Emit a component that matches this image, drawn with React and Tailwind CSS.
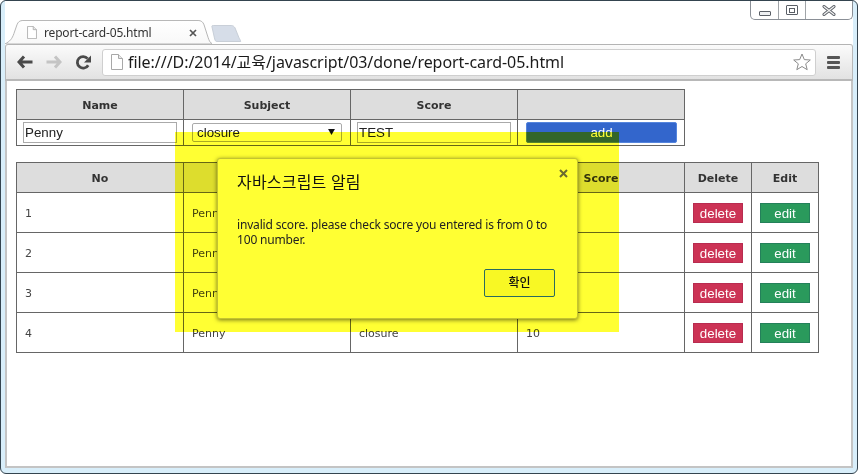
import React from 'react';

const rows = [
    { no: 1, name: 'Penny', subject: 'closure', score: 10 },
    { no: 2, name: 'Penny', subject: 'closure', score: 10 },
    { no: 3, name: 'Penny', subject: 'closure', score: 10 },
    { no: 4, name: 'Penny', subject: 'closure', score: 10 },
];

const PageIcon = ({ className }) => (
    <svg className={className} viewBox="0 0 12 16" fill="none">
        <path d="M0.5 0.5H7.5L11.5 4.5V15.5H0.5Z" fill="#fff" stroke="#a8a8a8" />
        <path d="M7.5 0.5V4.5H11.5" fill="#e8e8e8" stroke="#a8a8a8" />
    </svg>
);

function WindowControls() {
    return (
        <div className="flex justify-end">
            <div className="flex h-[19px] w-[103px] rounded-b-[5px] border border-t-0 border-[#8a8f96] bg-white">
                <div className="flex w-[28px] items-center justify-center border-r border-[#a0a4a8] pt-[6px]">
                    <div className="h-[5px] w-[12px] rounded-[1px] border border-[#5a5f66] bg-[#eef0f2]" />
                </div>
                <div className="flex w-[27px] items-center justify-center border-r border-[#a0a4a8]">
                    <div className="flex h-[10px] w-[12px] items-center justify-center rounded-[1px] border border-[#5a5f66]">
                        <div className="h-[5px] w-[6px] border border-[#5a5f66]" />
                    </div>
                </div>
                <div className="flex flex-1 items-center justify-center">
                    <svg width="14" height="11" viewBox="0 0 14 11">
                        <path d="M2 1.5L12 9.5M12 1.5L2 9.5" stroke="#5a5f66" strokeWidth="3" strokeLinecap="round" />
                        <path d="M2 1.5L12 9.5M12 1.5L2 9.5" stroke="#f4f4f4" strokeWidth="1.2" strokeLinecap="round" />
                    </svg>
                </div>
            </div>
        </div>
    );
}

function TabStrip() {
    return (
        <div className="relative flex h-[24px] items-end">
            {/* tab outline */}
            <div className="relative h-[24px] w-[207px] shrink-0">
                <svg className="absolute inset-0" width="207" height="24" viewBox="0 0 208 25" preserveAspectRatio="none">
                    <defs>
                        <linearGradient id="tabfill" x1="0" y1="0" x2="0" y2="1">
                            <stop offset="0" stopColor="#ffffff" />
                            <stop offset="1" stopColor="#f8f8f8" />
                        </linearGradient>
                    </defs>
                    <path d="M0 25C5 22 7 20 9 14L12 5C13 2 15 0.5 18 0.5H194C197 0.5 199 2 200 5L204 18C205 21 206 24 208 24.5V25Z" fill="url(#tabfill)" stroke="#b4b4b4" />
                </svg>
                <div className="relative flex h-full items-center pl-[22px] pr-[15px] pt-[1px]">
                    <PageIcon className="h-[13px] w-[10px] shrink-0" />
                    <span className="ml-[7px] flex-1 text-[12px] tracking-[-0.17px] whitespace-nowrap text-[#333] [font-family:'Noto_Sans','Open_Sans',sans-serif]">report-card-05.html</span>
                    <svg width="8" height="8" viewBox="0 0 8 8">
                        <path d="M1 1L7 7M7 1L1 7" stroke="#555" strokeWidth="1.7" />
                    </svg>
                </div>
            </div>
            <svg className="mb-[2px] ml-[-1px]" width="31" height="17" viewBox="0 0 32 18">
                <path d="M0.5 1.5C0.5 0.8 1 0.5 2 0.5H21C23 0.5 24 1.5 25 3L29 13C30 15 31 16.5 31 17.5H6C4.5 17.5 4 16.5 3.5 15Z" fill="#d6dde8" stroke="#c6ccd6" />
            </svg>
        </div>
    );
}

function Toolbar() {
    return (
        <div className="flex h-[37px] items-center rounded-t-[3px] border border-b-2 border-[#b8b8b8] border-t-[#b4b4b4] bg-gradient-to-b from-[#fbfbfb] to-[#e2e2e2] pl-[11px] pr-[12px]">
            {/* back */}
            <svg className="shrink-0" width="16" height="14" viewBox="0 0 16 14">
                <path d="M7 1.5L2 7L7 12.5M2.5 7H15.5" fill="none" stroke="#4a4a4a" strokeWidth="3" />
            </svg>
            {/* forward */}
            <svg className="ml-[13px] shrink-0" width="16" height="14" viewBox="0 0 16 14">
                <path d="M9 1.5L14 7L9 12.5M13.5 7H0.5" fill="none" stroke="#c4c4c4" strokeWidth="3" />
            </svg>
            {/* reload */}
            <svg className="ml-[13px] shrink-0" width="17" height="17" viewBox="0 0 17 17">
                <path d="M13.2 11.2A5.8 5.8 0 1 1 12.6 4.6" fill="none" stroke="#4a4a4a" strokeWidth="2.8" />
                <path d="M16 1.5V8.5H9Z" fill="#4a4a4a" />
            </svg>
            <div className="ml-[10px] flex h-[27px] flex-1 items-center rounded-[3px] border border-[#cfcfcf] bg-white pl-[8px] pr-[4px]">
                <PageIcon className="h-[16px] w-[12px] shrink-0" />
                <span className="ml-[5px] flex-1 text-[16px] leading-[20px] tracking-[-0.05px] whitespace-nowrap text-[#1a1a1a] [font-family:'Noto_Sans','Noto_Sans_CJK_KR',sans-serif]">file:///D:/2014/교육/javascript/03/done/report-card-05.html</span>
                <svg width="18" height="18" viewBox="0 0 18 18">
                    <path d="M9 1L11.3 6.6L17.3 7L12.7 10.8L14.2 16.7L9 13.5L3.8 16.7L5.3 10.8L0.7 7L6.7 6.6Z" fill="#fff" stroke="#8a8a8a" />
                </svg>
            </div>
            <div className="ml-[11px] flex w-[13px] shrink-0 flex-col gap-[2px]">
                <div className="h-[3px] rounded-[1px] bg-[#555]" />
                <div className="h-[3px] rounded-[1px] bg-[#555]" />
                <div className="h-[3px] rounded-[1px] bg-[#555]" />
            </div>
        </div>
    );
}

function AddTable() {
    const fieldClass = "block h-[21px] w-[154px] border border-[#aaa] bg-white pl-[1px] text-[13.33px] text-[#222] outline-none [font-family:'Liberation_Sans',sans-serif]";
    const thClass = "h-[30px] w-[167px] border border-[#666] bg-[#ddd] pt-[3px] text-center text-[11px] font-bold text-[#333]";
    return (
        <table className="w-[669px] table-fixed border-collapse">
            <thead>
                <tr>
                    <th className={thClass}>Name</th>
                    <th className={thClass}>Subject</th>
                    <th className={thClass}>Score</th>
                    <th className={thClass}></th>
                </tr>
            </thead>
            <tbody>
                <tr className="h-[26px]">
                    <td className="border border-[#666] p-0 pl-[6px]">
                        <input className={fieldClass} readOnly value="Penny" />
                    </td>
                    <td className="border border-[#666] p-0 pl-[8px]">
                        <div className="relative h-[19px] w-[150px]">
                            <select className="block h-[19px] w-[150px] appearance-none rounded-[2px] border border-[#aaa] bg-white pl-[4px] text-[13.33px] leading-[17px] text-[#222] [font-family:'Liberation_Sans',sans-serif]">
                                <option>closure</option>
                            </select>
                            <svg className="absolute left-[136px] top-[6px]" width="7" height="6" viewBox="0 0 8 7">
                                <path d="M0 0H8L4 7Z" fill="#111" />
                            </svg>
                        </div>
                    </td>
                    <td className="border border-[#666] p-0 pl-[6px]">
                        <input className={fieldClass} readOnly value="TEST" />
                    </td>
                    <td className="border border-[#666] p-0 pl-[8px]">
                        <button className="block h-[21px] w-[151px] rounded-[2px] border border-[#5585dd] bg-[#3366cc] text-[13.33px] text-white [font-family:'Liberation_Sans',sans-serif]">add</button>
                    </td>
                </tr>
            </tbody>
        </table>
    );
}

function ScoreTable() {
    const thClass = "h-[30px] border border-[#666] bg-[#ddd] pt-[3px] text-center text-[11px] font-bold text-[#333]";
    const tdClass = "border border-[#666] pl-[8px] pt-[3px] text-[11px] text-[#444]";
    const btnClass = "mx-auto block h-[20px] w-[50px] text-[13.33px] text-white [font-family:'Liberation_Sans',sans-serif]";
    return (
        <table className="mt-[16px] w-[803px] table-fixed border-collapse">
            <thead>
                <tr>
                    <th className={`${thClass} w-[167px]`}>No</th>
                    <th className={`${thClass} w-[167px]`}>Name</th>
                    <th className={`${thClass} w-[167px]`}>Subject</th>
                    <th className={`${thClass} w-[167px]`}>Score</th>
                    <th className={`${thClass} w-[67px]`}>Delete</th>
                    <th className={`${thClass} w-[67px]`}>Edit</th>
                </tr>
            </thead>
            <tbody>
                {rows.map((row) => (
                    <tr key={row.no} className="h-[40px]">
                        <td className={tdClass}>{row.no}</td>
                        <td className={tdClass}>{row.name}</td>
                        <td className={tdClass}>{row.subject}</td>
                        <td className={tdClass}>{row.score}</td>
                        <td className="border border-[#666]">
                            <button className={`${btnClass} border border-[#b82c50] bg-[#cc3355]`}>delete</button>
                        </td>
                        <td className="border border-[#666]">
                            <button className={`${btnClass} border border-[#24805a] bg-[#2a9a5c]`}>edit</button>
                        </td>
                    </tr>
                ))}
            </tbody>
        </table>
    );
}

function AlertDialog() {
    return (
        <div className="absolute left-[216px] top-[157px] flex h-[161px] w-[361px] flex-col rounded-[3px] border border-[#c4c430] bg-[#ffff33] pl-[19px] pr-[21px] shadow-[0_1px_4px_rgba(0,0,0,0.55)] [font-family:'Noto_Sans','Noto_Sans_CJK_KR',sans-serif]">
            <svg className="absolute right-[9px] top-[10px]" width="9" height="9" viewBox="0 0 9 9">
                <path d="M1 1L8 8M8 1L1 8" stroke="#6a6a30" strokeWidth="2" />
            </svg>
            <div className="mt-[12px] text-[16px] leading-[22px] tracking-[0.2px] text-[#111]">자바스크립트 알림</div>
            <p className="mt-[24px] text-[12px] leading-[15px] tracking-[-0.17px] text-[#222]">invalid score. please check socre you entered is from 0 to 100 number.</p>
            <div className="mt-auto mb-[21px] mr-[1px] flex justify-end">
                <button className="h-[28px] w-[71px] rounded-[2px] border border-[#2a6a60] bg-[#f8f824] text-[12px] font-medium text-[#111]">확인</button>
            </div>
        </div>
    );
}

export default function App() {
    return (
        <div className="relative flex h-[474px] w-[858px] flex-col overflow-hidden rounded-[6px] border border-[#34444f] bg-[#d8eefa] px-[4px] pb-[5px] [font-family:'DejaVu_Sans',sans-serif]">
            <div className="flex flex-1 flex-col bg-white">
                <WindowControls />
                <TabStrip />
                <Toolbar />
                <div className="flex-1 border-x-2 border-b-2 border-[#c4c4c4] border-t-0 bg-white pl-[9px] pt-[8px]">
                    <AddTable />
                    <ScoreTable />
                </div>
            </div>

            {/* yellow highlight laid over the page */}
            <div className="absolute left-[174px] top-[131px] h-[200px] w-[444px] bg-[#ffff33] mix-blend-multiply" />
            <AlertDialog />
        </div>
    );
}
